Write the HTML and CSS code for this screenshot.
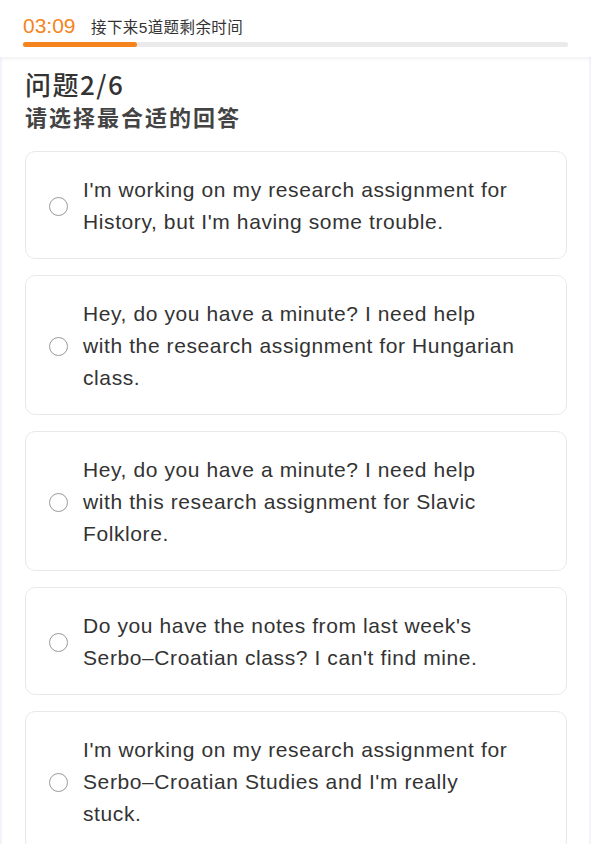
FILE: index.html
```html
<!DOCTYPE html>
<html lang="zh">
<head>
  <meta charset="UTF-8" />
  <meta name="viewport" content="width=device-width, initial-scale=1" />
  <title>问题2/6</title>
  <link rel="stylesheet" href="styles.css">
</head>
<body>
  <header class="top">
    <div class="timer-row">
      <span class="timer">03:09</span>
      <span class="timer-label">接下来5道题剩余时间</span>
    </div>
    <div class="track"><div class="fill" style="width: 21%"></div></div>
  </header>

  <main class="panel">
    <h1 class="q-title">问题2/6</h1>
    <h2 class="q-sub">请选择最合适的回答</h2>

    <ul class="options">
      <li class="option">
        <span class="radio"></span>
        <p>I'm working on my research assignment for History, but I'm having some trouble.</p>
      </li>
      <li class="option">
        <span class="radio"></span>
        <p>Hey, do you have a minute? I need help with the research assignment for Hungarian class.</p>
      </li>
      <li class="option">
        <span class="radio"></span>
        <p>Hey, do you have a minute? I need help with this research assignment for Slavic Folklore.</p>
      </li>
      <li class="option">
        <span class="radio"></span>
        <p>Do you have the notes from last week's Serbo&#8211;Croatian class? I can't find mine.</p>
      </li>
      <li class="option">
        <span class="radio"></span>
        <p>I'm working on my research assignment for Serbo&#8211;Croatian Studies and I'm really stuck.</p>
      </li>
    </ul>
  </main>
</body>
</html>
```

FILE: styles.css
```css
html, body {
  margin: 0;
  padding: 0;
}
body {
  font-family: "Liberation Sans", "Noto Sans CJK SC", sans-serif;
  color: #333;
  background: #fff;
  overflow: hidden;
}
.top {
  padding: 14px 23px 10px;
  box-shadow: 0 2px 4px rgba(0,0,0,0.06);
  position: relative;
}
.timer-row {
  display: flex;
  align-items: baseline;
  height: 26px;
}
.timer {
  color: #f5841f;
  font-size: 21px;
  width: 68px;
}
.timer-label {
  font-size: 15.5px;
  letter-spacing: 0.4px;
  color: #333;
}
.track {
  margin-top: 2px;
  height: 5px;
  background: #eaeaea;
  border-radius: 3px;
}
.fill {
  height: 100%;
  background: #f5841f;
  border-radius: 3px;
}
.panel {
  padding: 10px 22px 0 23px;
  border-left: 2px solid #f1f4fa;
  border-right: 2px solid #f1f4fa;
}
.q-title {
  margin: 0;
  font-family: "Noto Sans CJK SC", sans-serif;
  font-size: 26px;
  font-weight: 500;
  letter-spacing: 1.5px;
  line-height: 34px;
  color: #333;
}
.q-sub {
  margin: 3px 0 0;
  font-size: 22px;
  font-weight: bold;
  letter-spacing: 2px;
  line-height: 30px;
  color: #444;
}
.options {
  list-style: none;
  margin: 17px 0 0;
  padding: 0;
  display: flex;
  flex-direction: column;
  gap: 16px;
}
.option {
  display: flex;
  align-items: center;
  border: 1px solid #e8e8e8;
  border-radius: 10px;
  padding: 22px 47px 20px 23px;
}
.radio {
  flex: none;
  width: 17px;
  height: 17px;
  border: 1.5px solid #999;
  border-radius: 50%;
  margin-right: 15px;
}
.option p {
  margin: 0;
  font-size: 21px;
  letter-spacing: 0.6px;
  line-height: 32px;
  color: #333;
}
```
